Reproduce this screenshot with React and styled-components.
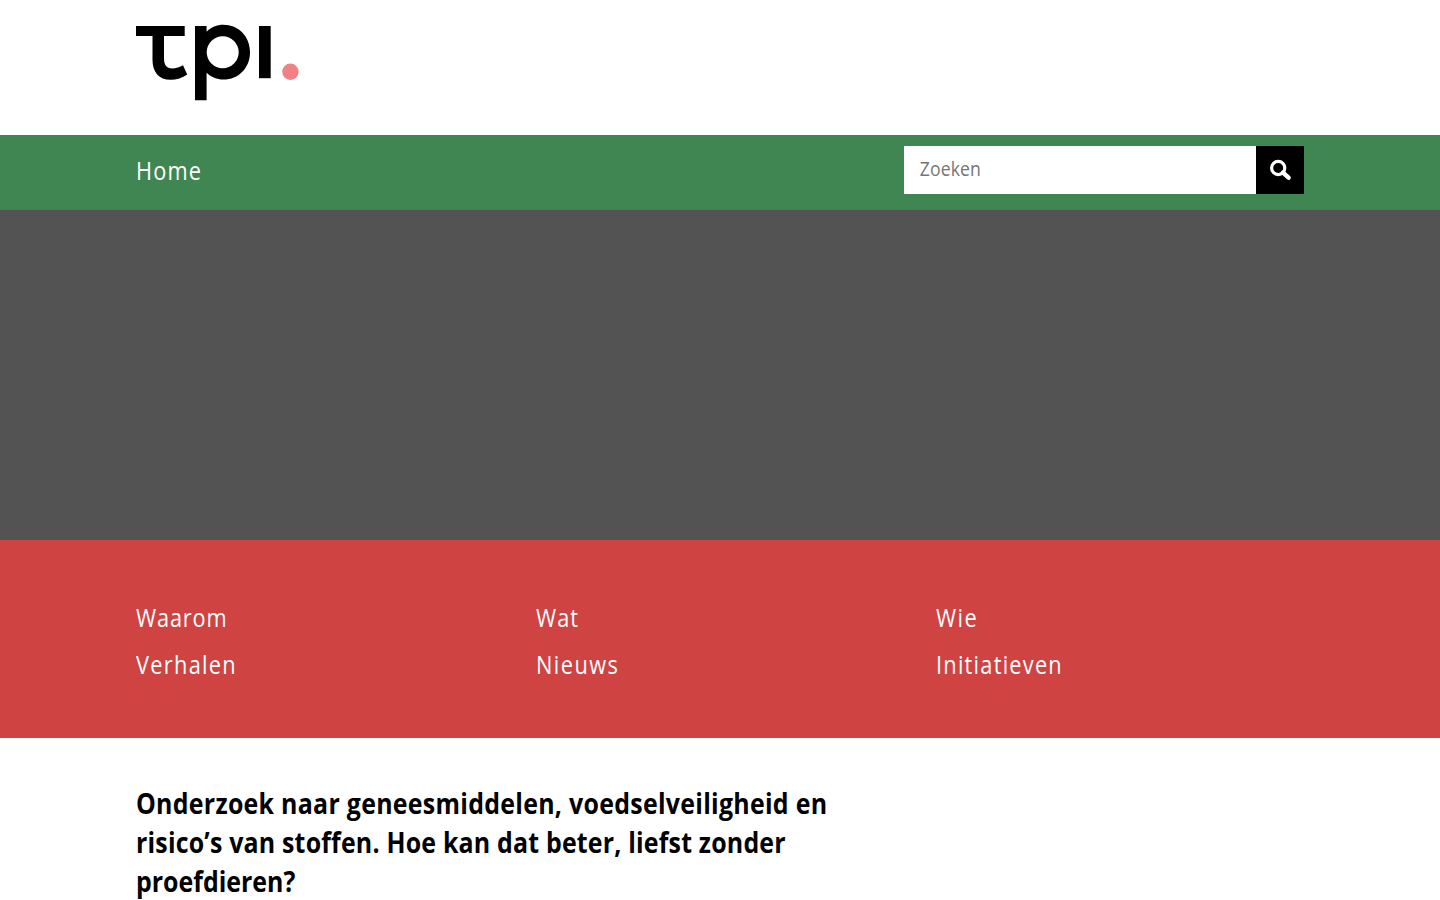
import React from "react";
import styled, { createGlobalStyle } from "styled-components";

const Global = createGlobalStyle`
  * { box-sizing: border-box; }
  html, body { margin: 0; padding: 0; height: 900px; overflow: hidden; }
  body {
    background: #fff;
    color: #000;
    font-family: "Open Sans", "Noto Sans", sans-serif;
  }
`;

const Wrap = styled.div`
  width: 1168px;
  margin: 0 auto;
`;

const Header = styled.header`
  height: 135px;
  padding-top: 24px;
`;

const Logo = styled.svg`
  display: block;
  width: 166px;
  height: 78px;
`;

const NavBar = styled.nav`
  height: 75px;
  background: #3f8652;
`;

const NavRow = styled(Wrap)`
  display: flex;
  justify-content: space-between;
  align-items: flex-start;
  padding-top: 11px;
`;

const NavLink = styled.a`
  display: block;
  color: #fff;
  font-size: 25px;
  line-height: 48px;
  white-space: nowrap;
  letter-spacing: ${(p) => p.$track}px;
  transform: scaleX(0.87);
  transform-origin: 0 0;
`;

const Search = styled.form`
  display: flex;
  width: 400px;
  height: 48px;
`;

const SearchBox = styled.div`
  flex: 1;
  min-width: 0;
  background: #fff;
  overflow: hidden;
`;

const SearchField = styled.input`
  display: block;
  width: 400px;
  height: 48px;
  border: 0;
  padding: 0 18px 4px;
  background: transparent;
  font-family: inherit;
  font-size: 20px;
  letter-spacing: 0.1px;
  transform: scaleX(0.88);
  transform-origin: 0 0;
  &::placeholder { color: #757575; opacity: 1; }
`;

const SearchButton = styled.button`
  width: 48px;
  height: 48px;
  border: 0;
  padding: 0;
  background: #000;
  display: flex;
  align-items: center;
  justify-content: center;
`;

const Banner = styled.div`
  height: 330px;
  background: #535353;
`;

const Menu = styled.section`
  height: 198px;
  background: #cf4342;
  padding-top: 53px;
`;

const MenuGrid = styled(Wrap)`
  display: grid;
  grid-template-columns: repeat(3, 368px);
  column-gap: 32px;
  grid-auto-rows: 47px;
`;

const Intro = styled.h1`
  width: 768px;
  margin: 0;
  padding-top: 46px;
  font-size: 28px;
  line-height: 39px;
  font-weight: 700;
`;

const IntroLine = styled.span`
  display: block;
  white-space: nowrap;
  letter-spacing: ${(p) => p.$track}px;
  transform: scaleX(0.89);
  transform-origin: 0 0;
`;

const links = [
  ["Waarom", 1],
  ["Wat", 1.2],
  ["Wie", 1.7],
  ["Verhalen", 1.5],
  ["Nieuws", 1.65],
  ["Initiatieven", 1.42],
];

const lines = [
  ["Onderzoek naar geneesmiddelen, voedselveiligheid en", 0.32],
  ["risico’s van stoffen. Hoe kan dat beter, liefst zonder", 0.22],
  ["proefdieren?", 0],
];

export default function App() {
  return (
    <>
      <Global />
      <Header>
        <Wrap>
          <Logo viewBox="0 0 166 78" role="img" aria-label="tpi">
            <path d="M0 2H48.7V12H28V34.5C28 41 30.8 44.5 36 44.5C40 44.5 44 43 47 41.3L51.2 50.5C46.5 54 40.5 55.8 34.5 55.8C23 55.8 16.5 48 16.5 36V12H0Z" />
            <path d="M59 2H70.6V7.8C75 3 81 0.8 87.4 0.8C102.5 0.8 114 12.5 114 28.2C114 44 102.5 55.6 87.4 55.6C81 55.6 75 53.2 70.6 48.8V76.2H59Z" />
            <circle cx="86.7" cy="28.2" r="16" fill="#fff" />
            <path d="M123 2H134.7V54.2H123Z" />
            <circle cx="154.4" cy="47.7" r="8.2" fill="#f08283" />
          </Logo>
        </Wrap>
      </Header>
      <NavBar>
        <NavRow>
          <NavLink $track={1.3}>Home</NavLink>
          <Search>
            <SearchBox>
              <SearchField placeholder="Zoeken" />
            </SearchBox>
            <SearchButton type="button" aria-label="Zoeken">
              <svg width="48" height="48" viewBox="0 0 48 48" fill="none" stroke="#fff">
                <circle cx="22.2" cy="22" r="6.6" strokeWidth="3.2" />
                <path d="M27 26.6L32.6 31.7" strokeWidth="4.4" strokeLinecap="round" />
              </svg>
            </SearchButton>
          </Search>
        </NavRow>
      </NavBar>
      <Banner />
      <Menu>
        <MenuGrid>
          {links.map(([t, k]) => (
            <NavLink key={t} $track={k}>{t}</NavLink>
          ))}
        </MenuGrid>
      </Menu>
      <Wrap>
        <Intro>
          {lines.map(([t, k]) => (
            <IntroLine key={t} $track={k}>{t}</IntroLine>
          ))}
        </Intro>
      </Wrap>
    </>
  );
}
